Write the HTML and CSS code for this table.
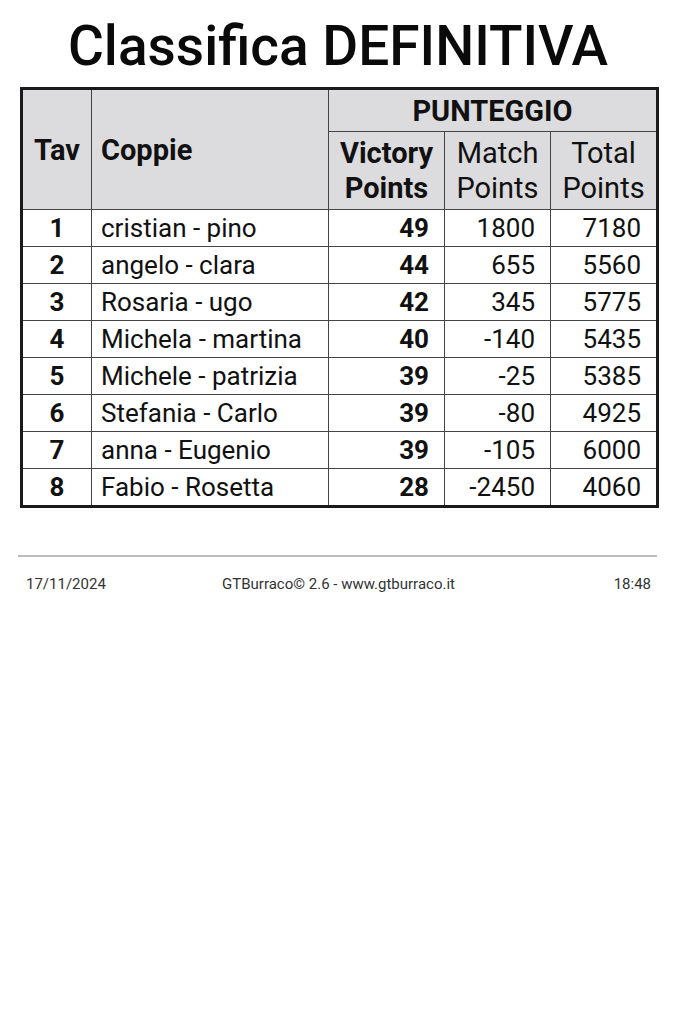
FILE: index.html
```html
<!DOCTYPE html>
<html lang="it">
<head>
<meta charset="utf-8">
<title>Classifica DEFINITIVA</title>
<link rel="stylesheet" href="styles.css">
</head>
<body>
<div class="page">
  <h1 class="title">Classifica DEFINITIVA</h1>
  <table class="rank">
    <colgroup>
      <col class="c-tav"><col class="c-cop"><col class="c-vp"><col class="c-mp"><col class="c-tp">
    </colgroup>
    <thead>
      <tr class="h1">
        <th rowspan="2" class="tav">Tav</th>
        <th rowspan="2" class="cop">Coppie</th>
        <th colspan="3" class="pun">PUNTEGGIO</th>
      </tr>
      <tr class="h2">
        <th class="vp">Victory<br>Points</th>
        <th class="light">Match<br>Points</th>
        <th class="light">Total<br>Points</th>
      </tr>
    </thead>
    <tbody>
      <tr><td class="n">1</td><td class="nm">cristian - pino</td><td class="v">49</td><td class="r">1800</td><td class="r">7180</td></tr>
      <tr><td class="n">2</td><td class="nm">angelo - clara</td><td class="v">44</td><td class="r">655</td><td class="r">5560</td></tr>
      <tr><td class="n">3</td><td class="nm">Rosaria - ugo</td><td class="v">42</td><td class="r">345</td><td class="r">5775</td></tr>
      <tr><td class="n">4</td><td class="nm">Michela - martina</td><td class="v">40</td><td class="r">-140</td><td class="r">5435</td></tr>
      <tr><td class="n">5</td><td class="nm">Michele - patrizia</td><td class="v">39</td><td class="r">-25</td><td class="r">5385</td></tr>
      <tr><td class="n">6</td><td class="nm">Stefania - Carlo</td><td class="v">39</td><td class="r">-80</td><td class="r">4925</td></tr>
      <tr><td class="n">7</td><td class="nm">anna - Eugenio</td><td class="v">39</td><td class="r">-105</td><td class="r">6000</td></tr>
      <tr><td class="n">8</td><td class="nm">Fabio - Rosetta</td><td class="v">28</td><td class="r">-2450</td><td class="r">4060</td></tr>
    </tbody>
  </table>
  <hr class="rule">
  <footer class="foot">
    <span class="f-left">17/11/2024</span>
    <span class="f-mid">GTBurraco© 2.6 - www.gtburraco.it</span>
    <span class="f-right">18:48</span>
  </footer>
</div>
</body>
</html>
```
FILE: styles.css
```css
html, body {
  margin: 0;
  padding: 0;
  background: #ffffff;
}
body {
  font-family: Roboto, "Noto Sans", sans-serif;
  color: #111;
}
.page {
  width: 676px;
  padding-top: 10px;
}
.title {
  margin: 0;
  height: 72px;
  text-align: center;
  font-size: 55px;
  font-weight: 500;
  line-height: 72px;
  color: #0a0a0a;
}
.rank {
  margin: 5px 0 0 20px;
  width: 636px;
  border-collapse: collapse;
  border: 3px solid #1a1a1a;
  table-layout: fixed;
  font-size: 26px;
}
.c-tav { width: 70px; }
.c-cop { width: 237px; }
.c-vp { width: 116px; }
.c-mp { width: 106px; }
.c-tp { width: 107px; }
.rank th, .rank td {
  border: 1px solid #444;
  padding: 0;
}
.rank th {
  background: #dcdcde;
  font-weight: 700;
  font-size: 29px;
  color: #111;
}
.h1 th { height: 41px; line-height: 34px; }
.h2 th { height: 77px; line-height: 35px; }
.tav { text-align: center; }
.cop { text-align: left; padding-left: 9px !important; }
.pun { text-align: center; }
.light { font-weight: 400 !important; }
.rank td {
  height: 36px;
  line-height: 36px;
  font-weight: 400;
  color: #111;
}
.n { text-align: center; font-weight: 700 !important; }
.nm { padding-left: 9px !important; white-space: nowrap; }
.v { text-align: right; padding-right: 15px !important; font-weight: 700 !important; }
.r { text-align: right; padding-right: 15px !important; }
.rule {
  margin: 47px 0 0 18px;
  width: 639px;
  border: 0;
  height: 2px;
  background: #bdbdbd;
}
.foot {
  display: grid;
  grid-template-columns: 1fr auto 1fr;
  margin: 18px 25px 0 26px;
  font-size: 15px;
  color: #333;
}
.f-left { justify-self: start; }
.f-mid { justify-self: center; }
.f-right { justify-self: end; }
```
